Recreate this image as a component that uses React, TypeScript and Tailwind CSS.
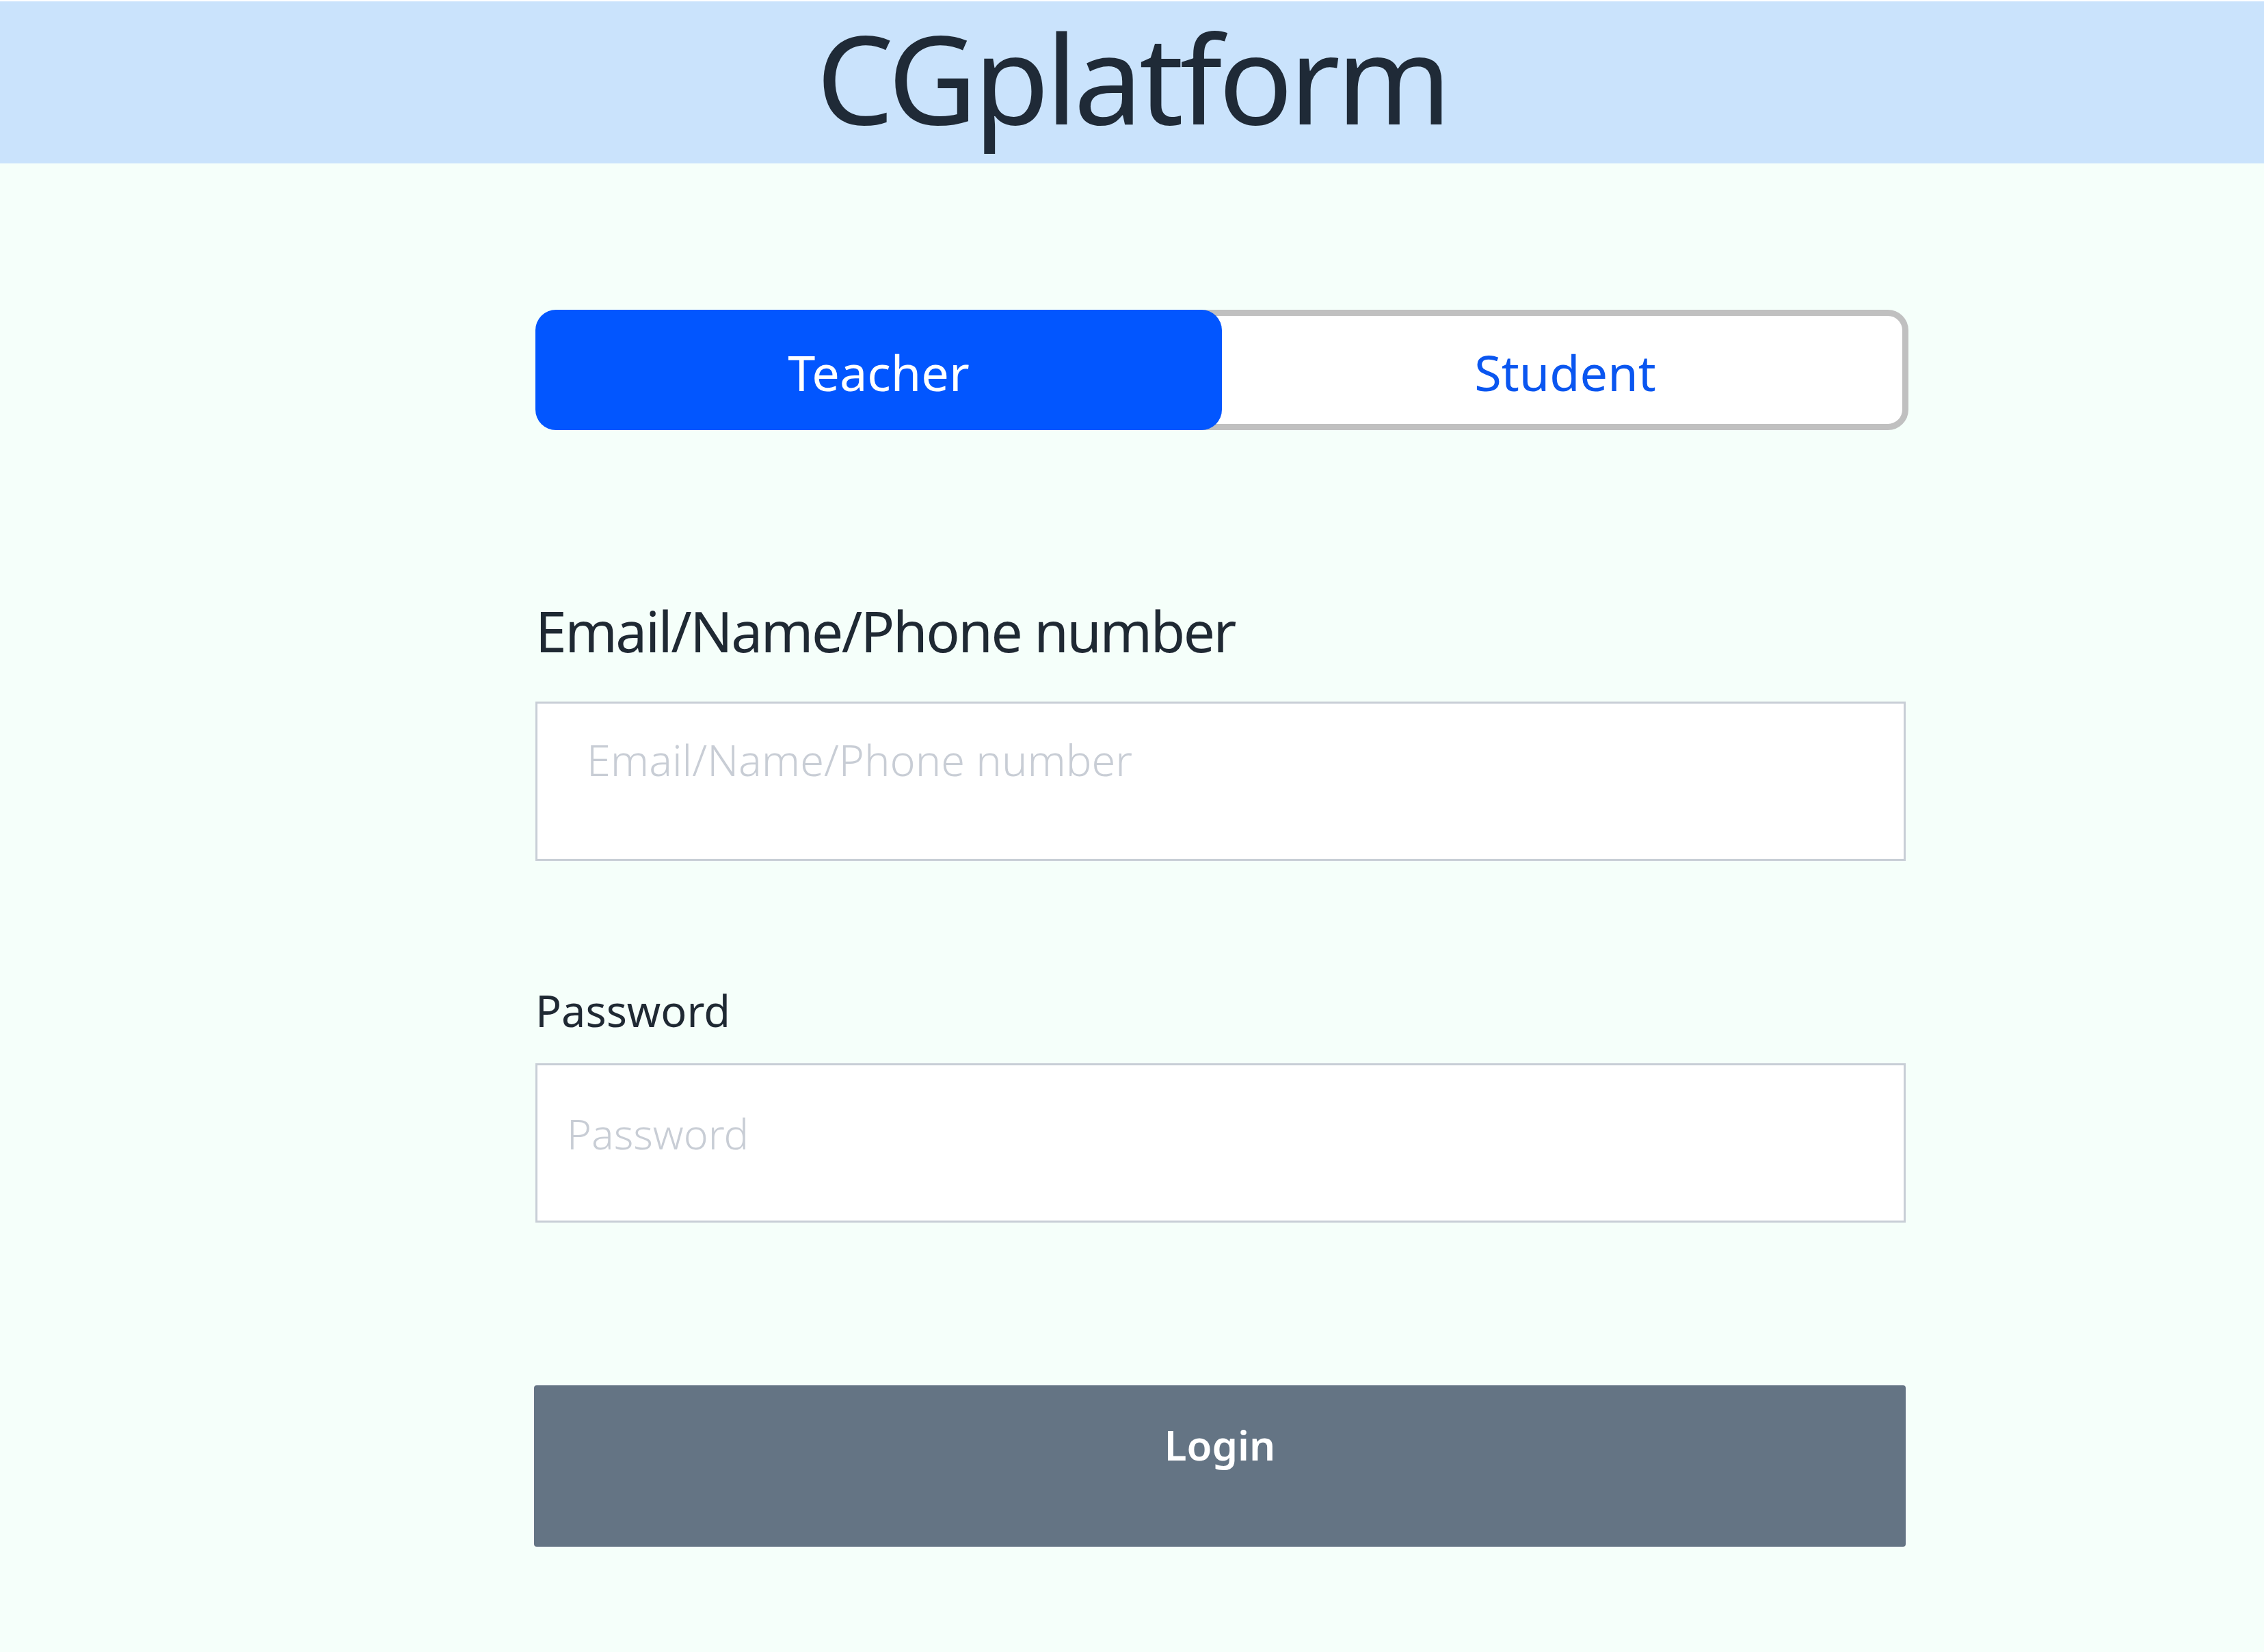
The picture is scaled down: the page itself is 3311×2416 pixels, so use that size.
import { useState } from "react";

type Role = "Teacher" | "Student";

const App = () => {
  const [role, setRole] = useState<Role>("Teacher");

  return (
    <div
      className="min-h-screen flex flex-col bg-[#f5fffa]"
      style={{ fontFamily: '"Noto Sans", "Open Sans", sans-serif' }}
    >
      {/* Header */}
      <header className="h-[239px] bg-[#cae3fc] border-t-[2px] border-white flex justify-center">
        <h1 className="text-[180px] leading-[221px] font-normal text-[#1f2a37] tracking-[-0.03em]">
          CGplatform
        </h1>
      </header>

      {/* Login form */}
      <main className="flex-1 pl-[783px] pt-[214px]">
        <div className="w-[2004px]">
          {/* Role toggle */}
          <div className="flex h-[176px] w-[2008px]">
            <button
              onClick={() => setRole("Teacher")}
              className={`relative z-10 w-1/2 h-full rounded-[30px] flex items-center justify-center pt-[6px] text-[72px] leading-none ${
                role === "Teacher"
                  ? "bg-[#0256ff] text-white"
                  : "bg-transparent text-[#0a56f0]"
              }`}
            >
              Teacher
            </button>
            <button
              onClick={() => setRole("Student")}
              className="-ml-[40px] pl-[40px] w-[calc(50%+40px)] h-full bg-white border-[9px] border-[#c0c0c0] rounded-r-[30px] flex items-center justify-center pt-[6px] text-[72px] leading-none text-[#0a56f0]"
            >
              Student
            </button>
          </div>

          {/* Account */}
          <label className="block mt-[252px] text-[82px] leading-none text-[#1f2933] tracking-[-0.03em]">
            Email/Name/Phone number
          </label>
          <input
            type="text"
            placeholder="Email/Name/Phone number"
            className="block mt-[63px] w-full h-[233px] bg-white border-[3px] border-[#c8ced6] pl-[72px] pt-[51px] pb-[116px] text-[63px] leading-none font-light text-[#1f2933] placeholder:text-[#c8cdd5] outline-none"
          />

          {/* Password */}
          <label className="block mt-[187px] text-[63px] leading-none text-[#1f2933]">
            Password
          </label>
          <input
            type="password"
            placeholder="Password"
            className="block mt-[46px] w-full h-[233px] bg-white border-[3px] border-[#c8ced6] pl-[43px] pt-[70px] pb-[98px] text-[61px] leading-none font-light text-[#1f2933] placeholder:text-[#c8cdd5] outline-none"
          />

          {/* Submit */}
          <button className="flex items-start justify-center mt-[238px] w-[2006px] -ml-[2px] h-[236px] rounded-[4px] bg-[#647484] pt-[57px] text-[60px] leading-none font-semibold text-white">
            Login
          </button>
        </div>
      </main>
    </div>
  );
};

export default App;
